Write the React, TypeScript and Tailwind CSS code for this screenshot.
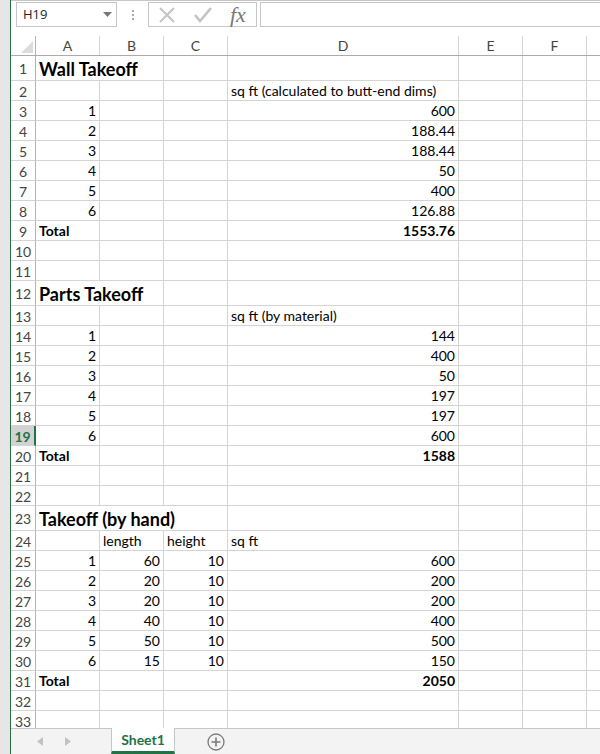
import React from 'react';

type Cell = { v: string; align?: 'l' | 'r'; bold?: boolean };
type Row = {
  n: number;
  title?: string;
  span?: number;
  cells?: (Cell | null)[];
};

const COLS = [
  { id: 'A', w: 'w-[64px]' },
  { id: 'B', w: 'w-[64px]' },
  { id: 'C', w: 'w-[64px]' },
  { id: 'D', w: 'w-[231px]' },
  { id: 'E', w: 'w-[64px]' },
  { id: 'F', w: 'w-[64px]' },
];

const r = (v: string): Cell => ({ v, align: 'r' });
const l = (v: string): Cell => ({ v, align: 'l' });
const total = (v: string): (Cell | null)[] => [
  { v: 'Total', align: 'l', bold: true },
  null,
  null,
  { v, align: 'r', bold: true },
];

const block = (start: number, vals: string[]) =>
  vals.map((d, i) => ({ n: start + i, cells: [r(String(i + 1)), null, null, r(d)] }));

const ROWS: Row[] = [
  { n: 1, title: 'Wall Takeoff', span: 2 },
  { n: 2, cells: [null, null, null, l('sq ft (calculated to butt-end dims)')] },
  ...block(3, ['600', '188.44', '188.44', '50', '400', '126.88']),
  { n: 9, cells: total('1553.76') },
  { n: 10 },
  { n: 11 },
  { n: 12, title: 'Parts Takeoff', span: 2 },
  { n: 13, cells: [null, null, null, l('sq ft (by material)')] },
  ...block(14, ['144', '400', '50', '197', '197', '600']),
  { n: 20, cells: total('1588') },
  { n: 21 },
  { n: 22 },
  { n: 23, title: 'Takeoff (by hand)', span: 3 },
  { n: 24, cells: [null, l('length'), l('height'), l('sq ft')] },
  ...[
    ['60', '600'],
    ['20', '200'],
    ['20', '200'],
    ['40', '400'],
    ['50', '500'],
    ['15', '150'],
  ].map(([len, sq], i) => ({ n: 25 + i, cells: [r(String(i + 1)), r(len), r('10'), r(sq)] })),
  { n: 31, cells: total('2050') },
  { n: 32 },
  { n: 33 },
];

const grid = 'border-r border-b border-[#d4d4d4]';

function RowHeader({ n, tall }: { n: number; tall: boolean }) {
  const active = n === 19;
  return (
    <div
      className={`w-[25px] shrink-0 flex items-center justify-center pt-[2px] border-b border-[#d4d4d4] text-[14px] leading-[18px] ${
        tall ? 'h-[25px]' : 'h-[20px]'
      } ${
        active
          ? 'bg-[#d2d2d2] text-[#217346] font-bold border-r-2 border-r-[#217346]'
          : 'text-[#444] border-r border-r-[#b4b4b4]'
      }`}
    >
      {n}
    </div>
  );
}

function SheetRow({ row }: { row: Row }) {
  const h = row.title ? 'h-[25px]' : 'h-[20px]';
  if (row.title) {
    const spanW = row.span === 3 ? 'w-[192px]' : 'w-[128px]';
    return (
      <div className="flex">
        <RowHeader n={row.n} tall />
        <div className={`${spanW} ${h} ${grid} shrink-0 flex items-end pl-[3px] font-bold text-[18px] leading-[22px] whitespace-nowrap`}>
          {row.title}
        </div>
        {COLS.slice(row.span).map((c) => (
          <div key={c.id} className={`${c.w} ${h} ${grid} shrink-0`} />
        ))}
        <div className={`flex-1 ${h} border-b border-[#d4d4d4]`} />
      </div>
    );
  }
  return (
    <div className="flex">
      <RowHeader n={row.n} tall={false} />
      {COLS.map((c, i) => {
        const cell = row.cells?.[i];
        return (
          <div
            key={c.id}
            className={`${c.w} ${h} ${grid} shrink-0 flex items-end px-[3px] leading-[18px] whitespace-nowrap ${
              cell?.align === 'r' ? 'justify-end' : 'justify-start'
            } ${cell?.bold ? 'font-bold' : ''}`}
          >
            {cell?.v}
          </div>
        );
      })}
      <div className={`flex-1 ${h} border-b border-[#d4d4d4]`} />
    </div>
  );
}

function FormulaBar() {
  return (
    <div className="h-[36px] flex items-start pt-[1px] border-t border-[#c6c6c6] font-['Open_Sans',sans-serif]">
      <div className="ml-[5px] w-[101px] h-[25px] border border-[#c6c6c6] flex items-center justify-between pl-[6px] pr-[4px] text-[13px] text-[#222]">
        <span>H19</span>
        <svg width="9" height="5" viewBox="0 0 9 5">
          <path d="M0 0h9L4.5 5z" fill="#777" />
        </svg>
      </div>
      <div className="w-[31px] h-[25px] flex flex-col items-center justify-center gap-[2px]">
        <span className="w-[2px] h-[2px] bg-[#aaa]" />
        <span className="w-[2px] h-[2px] bg-[#aaa]" />
        <span className="w-[2px] h-[2px] bg-[#aaa]" />
      </div>
      <div className="w-[109px] h-[25px] border border-[#c6c6c6] flex items-center">
        <svg width="18" height="18" viewBox="0 0 18 18" className="ml-[9px]">
          <path d="M2 2l14 14M16 2L2 16" stroke="#c4c4c4" strokeWidth="2" />
        </svg>
        <svg width="20" height="18" viewBox="0 0 20 18" className="ml-[17px]">
          <path d="M2 9l5 6L18 2" stroke="#c4c4c4" strokeWidth="2.6" fill="none" />
        </svg>
        <span className="ml-[17px] text-[22px] leading-none italic text-[#777] font-['Liberation_Serif',serif]">
          fx
        </span>
      </div>
      <div className="ml-[3px] flex-1 h-[25px] border-t border-b border-l border-[#c6c6c6]" />
    </div>
  );
}

function ColumnHeaders() {
  return (
    <div className="flex h-[20px] border-b border-[#ababab] text-[14px] text-[#444]">
      <div className="w-[25px] shrink-0 border-r border-[#b4b4b4] relative overflow-hidden">
        <svg width="12" height="12" viewBox="0 0 12 12" className="absolute right-[2px] bottom-[2px]">
          <path d="M12 0v12H0z" fill="#dcdcdc" />
        </svg>
      </div>
      {COLS.map((c) => (
        <div key={c.id} className={`${c.w} shrink-0 border-r border-[#d5d5d5] flex items-center justify-center`}>
          {c.id}
        </div>
      ))}
      <div className="flex-1" />
    </div>
  );
}

function SheetTabs() {
  return (
    <div className="h-[26px] flex border-t border-[#c6c6c6] bg-[#f3f3f3] font-['Open_Sans',sans-serif]">
      <div className="w-[100px] flex items-center pl-[26px] gap-[22px]">
        <svg width="6" height="9" viewBox="0 0 6 9">
          <path d="M6 0v9L0 4.5z" fill="#c2c2c2" />
        </svg>
        <svg width="6" height="9" viewBox="0 0 6 9">
          <path d="M0 0v9l6-4.5z" fill="#c2c2c2" />
        </svg>
      </div>
      <div className="-mt-px w-[64px] h-[26px] bg-white border-x border-[#c6c6c6] border-b-[3px] border-b-[#217346] flex items-center justify-center text-[14px] font-bold text-[#217346] font-['Lato',sans-serif]">
        Sheet1
      </div>
      <div className="ml-[32px] flex items-center">
        <svg width="18" height="18" viewBox="0 0 18 18">
          <circle cx="9" cy="9" r="8" fill="none" stroke="#7a7a7a" strokeWidth="1.3" />
          <path d="M9 4.5v9M4.5 9h9" stroke="#7a7a7a" strokeWidth="1.6" />
        </svg>
      </div>
    </div>
  );
}

export default function App() {
  return (
    <div className="w-[600px] h-[754px] overflow-hidden flex bg-[#e6e6e6] font-['Lato',sans-serif] text-[14px] text-black">
      <div className="w-[10px] shrink-0 bg-[#e6e6e6]" />
      <div className="w-px shrink-0 bg-[#217346]" />
      <div className="flex-1 flex flex-col bg-white min-w-0">
        <FormulaBar />
        <ColumnHeaders />
        <div className="flex-1 overflow-hidden">
          {ROWS.map((row) => (
            <SheetRow key={row.n} row={row} />
          ))}
        </div>
        <SheetTabs />
      </div>
    </div>
  );
}
